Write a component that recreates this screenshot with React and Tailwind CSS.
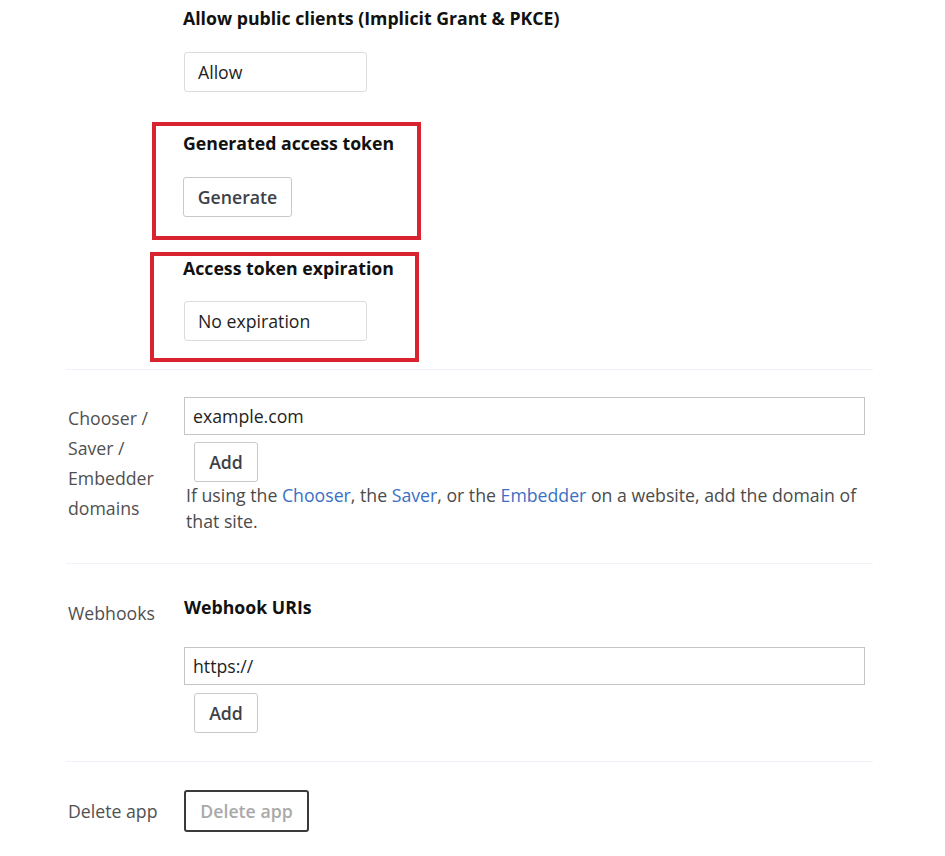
import React from "react";

const font = { fontFamily: '"Open Sans", "Noto Sans", sans-serif' };

function SelectBox({ children }) {
  return (
    <div className="w-[183px] h-[40px] border border-[#dcdcdc] rounded-[3px] pl-[13px] flex items-center text-[17.7px] text-[#1e1e1e]">
      {children}
    </div>
  );
}

function AddButton() {
  return (
    <button className="ml-[10px] w-[64px] h-[40px] border border-[#c9c9c9] rounded-[3px] bg-white text-[17.7px] font-semibold text-[#3d4148] flex items-center justify-center">
      Add
    </button>
  );
}

function TextInput({ value }) {
  return (
    <div className="w-[681px] h-[38px] border border-[#c4c4c4] pl-[8px] flex items-center text-[17.7px] text-[#1e1e1e]">
      {value}
    </div>
  );
}

export default function App() {
  return (
    <div className="bg-white w-[945px] h-[856px] overflow-hidden" style={font}>
      <div className="ml-[66px] w-[807px]">
        {/* Top section */}
        <div className="pl-[117px] pt-[6px]">
          <div className="text-[17.7px] leading-[24px] font-bold text-[#111]">
            Allow public clients (Implicit Grant &amp; PKCE)
          </div>
          <div className="mt-[22px] ml-[1px]">
            <SelectBox>Allow</SelectBox>
          </div>
          <div className="mt-[30px] ml-[-31px] w-[269px] border-4 border-[#d9232e] pl-[27px] pt-[5px] pb-[19px]">
            <div className="text-[17.7px] leading-[24px] font-bold text-[#111]">
              Generated access token
            </div>
            <button className="mt-[22px] w-[109px] h-[40px] border border-[#c9c9c9] rounded-[3px] bg-white text-[17.7px] font-semibold text-[#3d4148] flex items-center justify-center">
              Generate
            </button>
          </div>
          <div className="mt-[12px] ml-[-33px] w-[269px] border-4 border-[#d9232e] pl-[29px] pt-0 pb-[17px]">
            <div className="text-[17.7px] leading-[24px] font-bold text-[#111]">
              Access token expiration
            </div>
            <div className="mt-[21px] ml-[1px]">
              <SelectBox>No expiration</SelectBox>
            </div>
          </div>
        </div>

        {/* Chooser section */}
        <div className="mt-[7px] border-t border-[#eef4fa] grid grid-cols-[118px_1fr] pt-[27px] pb-[29px]">
          <div className="pl-[2px] mt-[6px] text-[17.7px] leading-[30px] text-[#505050]">
            Chooser /<br />Saver /<br />Embedder<br />domains
          </div>
          <div>
            <TextInput value="example.com" />
            <div className="mt-[7px]">
              <AddButton />
            </div>
            <p className="ml-[2px] text-[17.7px] leading-[26px] text-[#4b4b4b]">
              If using the <span className="text-[#3a6fc4]">Chooser</span>, the{" "}
              <span className="text-[#3a6fc4]">Saver</span>, or the{" "}
              <span className="text-[#3a6fc4]">Embedder</span> on a website, add the domain of that site.
            </p>
          </div>
        </div>

        {/* Webhooks section */}
        <div className="border-t border-[#eef4fa] grid grid-cols-[118px_1fr] pt-[31px] pb-[28px]">
          <div className="pl-[2px] mt-[3px] text-[17.7px] leading-[30px] text-[#505050]">Webhooks</div>
          <div>
            <div className="text-[17.7px] leading-[24px] font-bold text-[#111]">Webhook URIs</div>
            <div className="mt-[28px]">
              <TextInput value="https://" />
            </div>
            <div className="mt-[8px]">
              <AddButton />
            </div>
          </div>
        </div>

        {/* Delete section */}
        <div className="border-t border-[#eef4fa] grid grid-cols-[118px_1fr] pt-[28px]">
          <div className="pl-[2px] flex items-center h-[42px] text-[17.7px] text-[#505050]">Delete app</div>
          <div>
            <button className="w-[125px] h-[42px] border-2 border-[#3a3a3a] rounded-[3px] bg-white text-[17.7px] font-semibold text-[#a9a9a9] flex items-center justify-center">
              Delete app
            </button>
          </div>
        </div>
      </div>
    </div>
  );
}
